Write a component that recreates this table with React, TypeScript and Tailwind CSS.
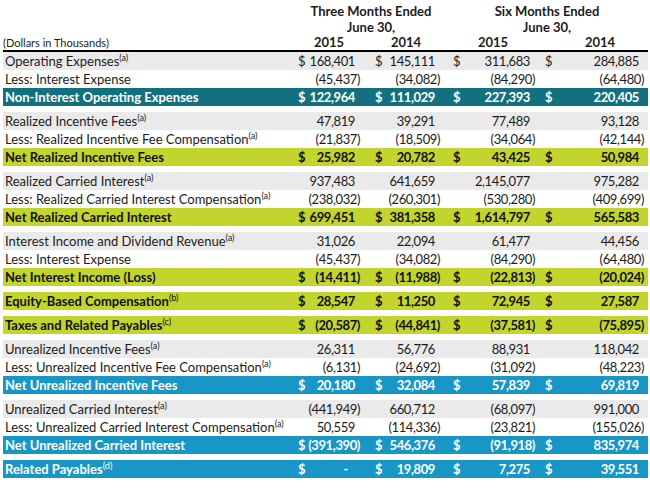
type Kind = "gray" | "white" | "teal" | "lime" | "blue";

type Row = {
  label: string;
  sup?: string;
  kind: Kind;
  dollar?: boolean;
  vals: string[];
};

const groups: Row[][] = [
  [
    { label: "Operating Expenses", sup: "(a)", kind: "gray", dollar: true, vals: ["168,401", "145,111", "311,683", "284,885"] },
    { label: "Less: Interest Expense", kind: "white", vals: ["(45,437)", "(34,082)", "(84,290)", "(64,480)"] },
    { label: "Non-Interest Operating Expenses", kind: "teal", dollar: true, vals: ["122,964", "111,029", "227,393", "220,405"] },
  ],
  [
    { label: "Realized Incentive Fees", sup: "(a)", kind: "gray", vals: ["47,819", "39,291", "77,489", "93,128"] },
    { label: "Less: Realized Incentive Fee Compensation", sup: "(a)", kind: "white", vals: ["(21,837)", "(18,509)", "(34,064)", "(42,144)"] },
    { label: "Net Realized Incentive Fees", kind: "lime", dollar: true, vals: ["25,982", "20,782", "43,425", "50,984"] },
  ],
  [
    { label: "Realized Carried Interest", sup: "(a)", kind: "gray", vals: ["937,483", "641,659", "2,145,077", "975,282"] },
    { label: "Less: Realized Carried Interest Compensation", sup: "(a)", kind: "white", vals: ["(238,032)", "(260,301)", "(530,280)", "(409,699)"] },
    { label: "Net Realized Carried Interest", kind: "lime", dollar: true, vals: ["699,451", "381,358", "1,614,797", "565,583"] },
  ],
  [
    { label: "Interest Income and Dividend Revenue", sup: "(a)", kind: "gray", vals: ["31,026", "22,094", "61,477", "44,456"] },
    { label: "Less: Interest Expense", kind: "white", vals: ["(45,437)", "(34,082)", "(84,290)", "(64,480)"] },
    { label: "Net Interest Income (Loss)", kind: "lime", dollar: true, vals: ["(14,411)", "(11,988)", "(22,813)", "(20,024)"] },
  ],
  [
    { label: "Equity-Based Compensation", sup: "(b)", kind: "lime", dollar: true, vals: ["28,547", "11,250", "72,945", "27,587"] },
  ],
  [
    { label: "Taxes and Related Payables", sup: "(c)", kind: "lime", dollar: true, vals: ["(20,587)", "(44,841)", "(37,581)", "(75,895)"] },
  ],
  [
    { label: "Unrealized Incentive Fees", sup: "(a)", kind: "gray", vals: ["26,311", "56,776", "88,931", "118,042"] },
    { label: "Less: Unrealized Incentive Fee Compensation", sup: "(a)", kind: "white", vals: ["(6,131)", "(24,692)", "(31,092)", "(48,223)"] },
    { label: "Net Unrealized Incentive Fees", kind: "blue", dollar: true, vals: ["20,180", "32,084", "57,839", "69,819"] },
  ],
  [
    { label: "Unrealized Carried Interest", sup: "(a)", kind: "gray", vals: ["(441,949)", "660,712", "(68,097)", "991,000"] },
    { label: "Less: Unrealized Carried Interest Compensation", sup: "(a)", kind: "white", vals: ["50,559", "(114,336)", "(23,821)", "(155,026)"] },
    { label: "Net Unrealized Carried Interest", kind: "blue", dollar: true, vals: ["(391,390)", "546,376", "(91,918)", "835,974"] },
  ],
  [
    { label: "Related Payables", sup: "(d)", kind: "blue", dollar: true, vals: ["-", "19,809", "7,275", "39,551"] },
  ],
];

const kindClass: Record<Kind, string> = {
  gray: "bg-[#eaeaea] text-[#1c1c1c]",
  white: "bg-white text-[#1c1c1c]",
  teal: "bg-[#12707f] text-white font-bold",
  lime: "bg-[#c3d52d] text-[#111] font-bold",
  blue: "bg-[#1896c6] text-white font-bold",
};

// each money column: "$" on the left, value on the right, positives keep room for ")"
const cellClass = [
  "w-[70px] pl-[2px] pr-[6px]",
  "w-[80px] pl-[9px] pr-[6px]",
  "w-[94px] pl-[7px] pr-[5px]",
  "w-[108px] pl-[5px] pr-[4px]",
];

function Value({ v, dollar, i }: { v: string; dollar?: boolean; i: number }) {
  const neg = v.startsWith("(");
  const dash = v === "-";
  return (
    <div className={`${cellClass[i]} shrink-0 flex items-center justify-between`}>
      <span>{dollar ? "$" : ""}</span>
      <span className={`tracking-[-0.4px] ${dash ? "pr-[12px]" : neg ? "" : "pr-[5px]"}`}>{v}</span>
    </div>
  );
}

function TableRow({ row }: { row: Row }) {
  return (
    <div className={`${kindClass[row.kind]} flex h-[18px] items-center text-[13px] leading-none whitespace-nowrap`}>
      <div className="w-[293px] shrink-0 pl-[2px]">
        {row.label}
        {row.sup && <sup className="text-[9px] font-normal">{row.sup}</sup>}
      </div>
      {row.vals.map((v, i) => (
        <Value key={i} v={v} dollar={row.dollar} i={i} />
      ))}
    </div>
  );
}

export default function App() {
  return (
    <div
      className="w-[650px] h-[495px] bg-white pl-[3px] pr-[2px] text-[#1c1c1c]"
      style={{ fontFamily: "Lato, 'Open Sans', sans-serif" }}
    >
      <div className="flex h-[50px] text-[13px] font-bold leading-none whitespace-nowrap">
        <div className="w-[293px] shrink-0 flex items-end pb-[2px] text-[11px] font-normal">
          (Dollars in Thousands)
        </div>
        <div className="w-[150px] shrink-0 flex flex-col items-center">
          <div className="pt-[5px]">Three Months Ended</div>
          <div className="pt-[3px]">June 30,</div>
          <div className="mt-auto pb-[1px] flex w-full">
            <span className="w-[70px] text-center pr-[4px]">2015</span>
            <span className="w-[80px] text-center">2014</span>
          </div>
        </div>
        <div className="w-[202px] shrink-0 flex flex-col items-center">
          <div className="pt-[5px]">Six Months Ended</div>
          <div className="pt-[3px]">June 30,</div>
          <div className="mt-auto pb-[1px] flex w-full">
            <span className="w-[94px] text-center">2015</span>
            <span className="w-[108px] text-center pl-[12px]">2014</span>
          </div>
        </div>
      </div>
      <div className="h-[2px] bg-black" />
      <div className="flex flex-col gap-[6px]">
        {groups.map((g, gi) => (
          <div key={gi} className="flex flex-col">
            {g.map((r, ri) => (
              <TableRow key={ri} row={r} />
            ))}
          </div>
        ))}
      </div>
    </div>
  );
}
